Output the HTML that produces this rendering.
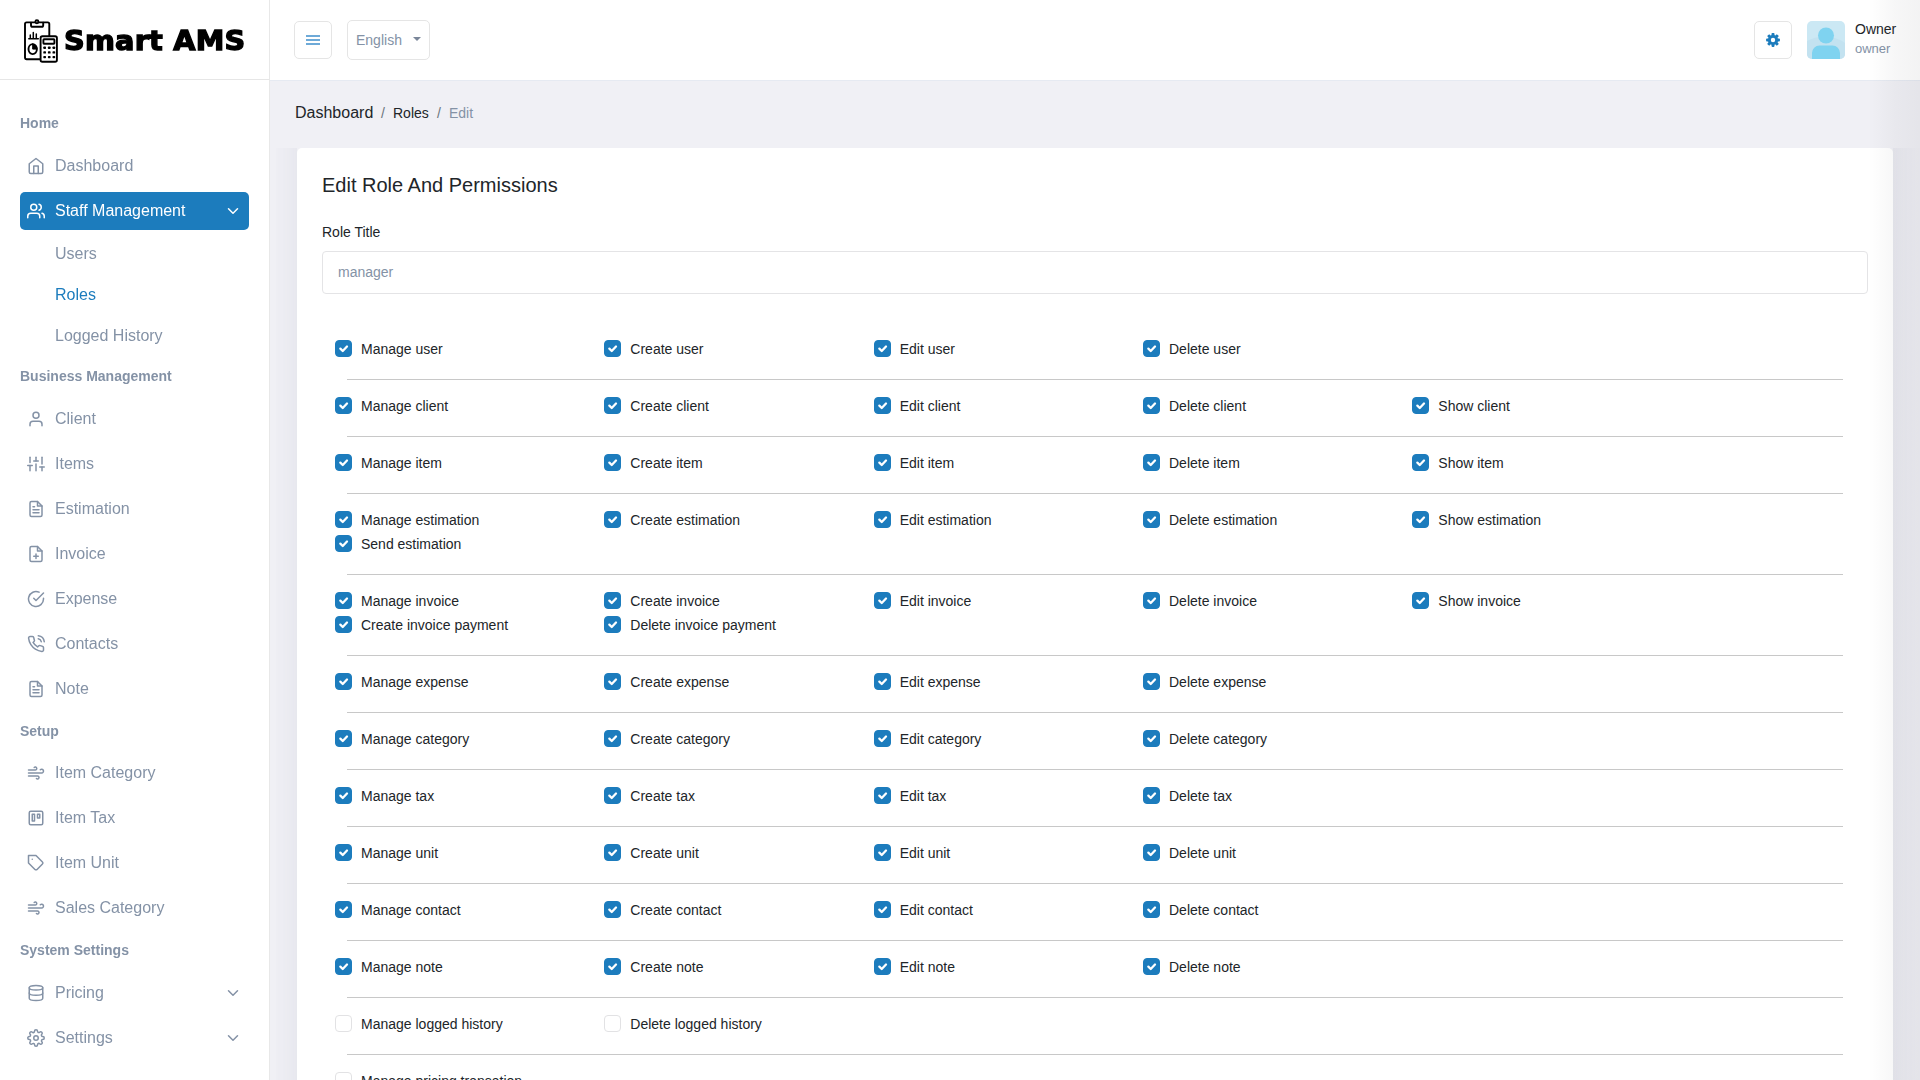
<!DOCTYPE html>
<html lang="en">
<head>
<meta charset="utf-8">
<title>Smart AMS - Edit Role</title>
<style>
*{box-sizing:border-box;margin:0;padding:0}
html,body{width:1920px;height:1080px;overflow:hidden}
body{font-family:"Liberation Sans",Arial,sans-serif;font-size:14px;color:#212529;background:#f0f0f5;position:relative}
a{text-decoration:none;color:inherit}
/* sidebar */
.sidebar{position:absolute;left:0;top:0;width:270px;height:1080px;background:#fff;border-right:1px solid #e8e8e8;z-index:5;}
.brand{position:absolute;left:0;top:0;width:269px;height:80px;z-index:2;will-change:transform;border-bottom:1px solid #e6e6e6}
.brand svg{position:absolute;left:23px;top:18px}
.brand .name{position:absolute;left:64px;top:21px;font-family:"DejaVu Sans","Liberation Sans",sans-serif;font-weight:bold;font-size:26.8px;line-height:40px;color:#000;white-space:nowrap;-webkit-text-stroke:1.3px #000;transform:scaleX(1.072);transform-origin:0 0;letter-spacing:.2px}
.navwrap{position:absolute;left:0;top:0;width:269px;height:1080px;will-change:transform}
.cap{position:absolute;left:20px;font-weight:bold;font-size:14px;line-height:20px;color:#8492a6;white-space:nowrap}
.nav{position:absolute;left:20px;width:229px;height:38px;border-radius:5px;color:#8492a6;font-size:16px;line-height:37px;white-space:nowrap}
.nav .ic{position:absolute;left:7px;top:10px;width:18px;height:18px}
.nav .tx{position:absolute;left:35px;top:0}
.nav .ar{position:absolute;left:204px;top:10px;width:18px;height:18px}
.nav.active{background:#1c7cbd;color:#fff}
.sub{position:absolute;left:55px;font-size:16px;line-height:20px;color:#8492a6;white-space:nowrap}
.sub.on{color:#1c7cbd}
svg.f{fill:none;stroke:currentColor;stroke-width:2;stroke-linecap:round;stroke-linejoin:round}
/* header */
.header{position:absolute;left:270px;top:0;width:1650px;height:81px;background:#fff;border-bottom:1px solid #e6eaf2}
.shr{position:absolute;left:1868px;top:0;width:52px;height:1080px;background:linear-gradient(90deg,rgba(20,20,30,0),rgba(20,20,30,.036) 52%,rgba(20,20,30,.05));z-index:4;pointer-events:none}
.hbtn{position:absolute;border:1px solid #e5e5e5;border-radius:5px;background:#fff}
/* content */
.bc{position:absolute;top:101px;left:295px;height:24px;line-height:24px;white-space:nowrap}
.bc span{position:absolute;top:0}
.cardwrap{position:absolute;left:276px;top:148px;width:1644px;height:932px;overflow:hidden}
.cardsh{position:absolute;left:21px;top:-90px;width:1596px;height:1200px;border-radius:5px;box-shadow:0 6px 30px rgba(182,186,203,.3)}
.card{position:absolute;left:21px;top:0;width:1596px;height:960px;background:#fff;border-radius:5px }
.title{position:absolute;left:25px;top:24px;font-size:20px;line-height:26px;color:#212529;white-space:nowrap}
.lbl{position:absolute;left:25px;top:74px;font-size:14px;line-height:20px;color:#212529}
.inp{position:absolute;left:25px;top:103px;width:1546px;height:43px;border:1px solid #e4e4e6;border-radius:4px;padding:0 15px;font-size:14px;line-height:41px;color:#8492a6}
.hr{position:absolute;left:50px;width:1496px;height:1px;background:#c8c8c8}
.ck{position:absolute;height:24px;line-height:24px;font-size:14px;color:#212529;white-space:nowrap;padding-left:26px}
.ck i{position:absolute;left:0;top:3px;width:17px;height:17px;border-radius:4px;border:1px solid #e2e2e4;background:#fff}
.ck.on i{background:#1c7cbd;border-color:#1c7cbd}
.ck.on i svg{position:absolute;left:-1px;top:-1px;width:17px;height:17px}
</style>
</head>
<body>
<div class="sidebar">
  <div class="brand">
    <svg width="40" height="48" viewBox="0 0 40 48" fill="none" stroke="#000" stroke-width="1.900" stroke-linejoin="round" stroke-linecap="round">
      <path d="M18 41.2H3.6a1.6 1.6 0 0 1-1.600-1.600V6a1.600 1.600 0 0 1 1.600-1.600h21.100a1.600 1.600 0 0 1 1.600 1.600v12"/>
      <path d="M8 4.600v2.600a1.600 1.600 0 0 0 1.600 1.600h9a1.600 1.600 0 0 0 1.600-1.600V4.600"/>
      <circle cx="13.900" cy="3.700" r="1.500" fill="#fff"/>
      <path d="M5.800 20.800h9.500M7.300 20v-3M10.300 20v-5.500M13.300 20v-4" stroke-width="1.500"/>
      <ellipse cx="9.700" cy="31.100" rx="4.200" ry="5"/>
      <path d="M9.700 26.100v5h4.200a4.200 5 0 0 0-4.200-5z" fill="#000" stroke-width="1"/>
      <rect x="17.600" y="18.200" width="16.300" height="25.600" rx="1.800" fill="#fff"/>
      <rect x="20.400" y="21.300" width="11" height="4.400" rx=".6"/>
      <g fill="#000" stroke="none">
        <rect x="20.300" y="28.600" width="2.700" height="2.300" rx=".7"/><rect x="24.900" y="28.600" width="2.700" height="2.300" rx=".7"/><rect x="29.500" y="28.600" width="2.700" height="2.300" rx=".7"/>
        <rect x="20.300" y="33.300" width="2.700" height="2.300" rx=".7"/><rect x="24.900" y="33.300" width="2.700" height="2.300" rx=".7"/><rect x="29.500" y="33.300" width="2.700" height="2.300" rx=".7"/>
        <rect x="20.300" y="38" width="2.700" height="2.300" rx=".7"/><rect x="24.900" y="38" width="2.700" height="2.300" rx=".7"/><rect x="29.500" y="38" width="2.700" height="2.300" rx=".7"/>
      </g>
    </svg>
    <div class="name">Smart AMS</div>
  </div>
  <div class="navwrap">
  <div class="cap" style="top:113px">Home</div>
  <a class="nav" style="top:147.0px"><svg class="f ic" viewBox="0 0 24 24"><path d="M3 9l9-7 9 7v11a2 2 0 0 1-2 2H5a2 2 0 0 1-2-2z"/><polyline points="9 22 9 12 15 12 15 22"/></svg><span class="tx">Dashboard</span></a>
  <a class="nav active" style="top:192.0px"><svg class="f ic" viewBox="0 0 24 24"><path d="M17 21v-2a4 4 0 0 0-4-4H5a4 4 0 0 0-4 4v2"/><circle cx="9" cy="7" r="4"/><path d="M23 21v-2a4 4 0 0 0-3-3.87"/><path d="M16 3.13a4 4 0 0 1 0 7.75"/></svg><span class="tx">Staff Management</span><svg class="f ar" viewBox="0 0 24 24"><polyline points="6 9 12 15 18 9"/></svg></a>
  <a class="sub" style="top:244px">Users</a>
  <a class="sub on" style="top:285px">Roles</a>
  <a class="sub" style="top:326px">Logged History</a>
  <div class="cap" style="top:366px">Business Management</div>
  <a class="nav" style="top:400.0px"><svg class="f ic" viewBox="0 0 24 24"><path d="M20 21v-2a4 4 0 0 0-4-4H8a4 4 0 0 0-4 4v2"/><circle cx="12" cy="7" r="4"/></svg><span class="tx">Client</span></a>
  <a class="nav" style="top:445.0px"><svg class="f ic" viewBox="0 0 24 24"><line x1="4" y1="21" x2="4" y2="14"/><line x1="4" y1="10" x2="4" y2="3"/><line x1="12" y1="21" x2="12" y2="12"/><line x1="12" y1="8" x2="12" y2="3"/><line x1="20" y1="21" x2="20" y2="16"/><line x1="20" y1="12" x2="20" y2="3"/><line x1="1" y1="14" x2="7" y2="14"/><line x1="9" y1="8" x2="15" y2="8"/><line x1="17" y1="16" x2="23" y2="16"/></svg><span class="tx">Items</span></a>
  <a class="nav" style="top:490.0px"><svg class="f ic" viewBox="0 0 24 24"><path d="M14 2H6a2 2 0 0 0-2 2v16a2 2 0 0 0 2 2h12a2 2 0 0 0 2-2V8z"/><polyline points="14 2 14 8 20 8"/><line x1="16" y1="13" x2="8" y2="13"/><line x1="16" y1="17" x2="8" y2="17"/><polyline points="10 9 9 9 8 9"/></svg><span class="tx">Estimation</span></a>
  <a class="nav" style="top:535.0px"><svg class="f ic" viewBox="0 0 24 24"><path d="M14 2H6a2 2 0 0 0-2 2v16a2 2 0 0 0 2 2h12a2 2 0 0 0 2-2V8z"/><polyline points="14 2 14 8 20 8"/><line x1="12" y1="18" x2="12" y2="12"/><line x1="9" y1="15" x2="15" y2="15"/></svg><span class="tx">Invoice</span></a>
  <a class="nav" style="top:580.0px"><svg class="f ic" viewBox="0 0 24 24"><path d="M22 11.08V12a10 10 0 1 1-5.93-9.14"/><polyline points="22 4 12 14.01 9 11.01"/></svg><span class="tx">Expense</span></a>
  <a class="nav" style="top:625.0px"><svg class="f ic" viewBox="0 0 24 24"><path d="M15.05 5A5 5 0 0 1 19 8.95M15.05 1A9 9 0 0 1 23 8.94m-1 7.98v3a2 2 0 0 1-2.18 2 19.79 19.79 0 0 1-8.63-3.07 19.5 19.5 0 0 1-6-6 19.79 19.79 0 0 1-3.07-8.67A2 2 0 0 1 4.11 2h3a2 2 0 0 1 2 1.72 12.84 12.84 0 0 0 .7 2.81 2 2 0 0 1-.45 2.11L8.09 9.91a16 16 0 0 0 6 6l1.27-1.27a2 2 0 0 1 2.11-.45 12.84 12.84 0 0 0 2.81.7A2 2 0 0 1 22 16.92z"/></svg><span class="tx">Contacts</span></a>
  <a class="nav" style="top:670.0px"><svg class="f ic" viewBox="0 0 24 24"><path d="M14 2H6a2 2 0 0 0-2 2v16a2 2 0 0 0 2 2h12a2 2 0 0 0 2-2V8z"/><polyline points="14 2 14 8 20 8"/><line x1="16" y1="13" x2="8" y2="13"/><line x1="16" y1="17" x2="8" y2="17"/><polyline points="10 9 9 9 8 9"/></svg><span class="tx">Note</span></a>
  <div class="cap" style="top:721px">Setup</div>
  <a class="nav" style="top:754.0px"><svg class="f ic" viewBox="0 0 24 24"><path d="M9.59 4.59A2 2 0 1 1 11 8H2m10.59 11.41A2 2 0 1 0 14 16H2m15.73-8.27A2.5 2.5 0 1 1 19.5 12H2"/></svg><span class="tx">Item Category</span></a>
  <a class="nav" style="top:799.0px"><svg class="f ic" viewBox="0 0 24 24"><rect x="3" y="3" width="18" height="18" rx="2" ry="2"/><rect x="7" y="7" width="3" height="9"/><rect x="14" y="7" width="3" height="5"/></svg><span class="tx">Item Tax</span></a>
  <a class="nav" style="top:844.0px"><svg class="f ic" viewBox="0 0 24 24"><path d="M20.59 13.41l-7.17 7.17a2 2 0 0 1-2.83 0L2 12V2h10l8.59 8.59a2 2 0 0 1 0 2.82z"/><line x1="7" y1="7" x2="7.01" y2="7"/></svg><span class="tx">Item Unit</span></a>
  <a class="nav" style="top:889.0px"><svg class="f ic" viewBox="0 0 24 24"><path d="M9.59 4.59A2 2 0 1 1 11 8H2m10.59 11.41A2 2 0 1 0 14 16H2m15.73-8.27A2.5 2.5 0 1 1 19.5 12H2"/></svg><span class="tx">Sales Category</span></a>
  <div class="cap" style="top:940px">System Settings</div>
  <a class="nav" style="top:974.0px"><svg class="f ic" viewBox="0 0 24 24"><ellipse cx="12" cy="5" rx="9" ry="3"/><path d="M21 12c0 1.66-4 3-9 3s-9-1.34-9-3"/><path d="M3 5v14c0 1.66 4 3 9 3s9-1.340 9-3V5"/></svg><span class="tx">Pricing</span><svg class="f ar" viewBox="0 0 24 24"><polyline points="6 9 12 15 18 9"/></svg></a>
  <a class="nav" style="top:1019.0px"><svg class="f ic" viewBox="0 0 24 24"><circle cx="12" cy="12" r="3"/><path d="M19.4 15a1.65 1.65 0 0 0 .33 1.82l.06.06a2 2 0 0 1 0 2.83 2 2 0 0 1-2.83 0l-.06-.06a1.65 1.65 0 0 0-1.82-.33 1.65 1.65 0 0 0-1 1.51V21a2 2 0 0 1-2 2 2 2 0 0 1-2-2v-.09A1.65 1.65 0 0 0 9 19.4a1.65 1.65 0 0 0-1.820.33l-.06.06a2 2 0 0 1-2.83 0 2 2 0 0 1 0-2.83l.06-.06a1.65 1.65 0 0 0 .33-1.82 1.65 1.65 0 0 0-1.51-1H3a2 2 0 0 1-2-2 2 2 0 0 1 2-2h.09A1.65 1.65 0 0 0 4.6 9a1.65 1.65 0 0 0-.33-1.82l-.06-.06a2 2 0 0 1 0-2.83 2 2 0 0 1 2.83 0l.06.06a1.65 1.65 0 0 0 1.820.33H9a1.65 1.65 0 0 0 1-1.51V3a2 2 0 0 1 2-2 2 2 0 0 1 2 2v.09a1.65 1.65 0 0 0 1 1.510 1.65 1.65 0 0 0 1.820-.33l.06-.06a2 2 0 0 1 2.830 0 2 2 0 0 1 0 2.83l-.06.06a1.65 1.65 0 0 0-.33 1.820V9a1.65 1.65 0 0 0 1.510 1H21a2 2 0 0 1 2 2 2 2 0 0 1-2 2h-.09a1.65 1.65 0 0 0-1.510 1z"/></svg><span class="tx">Settings</span><svg class="f ar" viewBox="0 0 24 24"><polyline points="6 9 12 15 18 9"/></svg></a>
  </div>
</div>
<div class="header">
  <div class="hbtn" style="left:24px;top:21px;width:38px;height:38px">
    <svg width="14" height="12" viewBox="0 0 14 12" style="position:absolute;left:11px;top:12px"><path d="M0 2h14M0 6h14M0 10h14" stroke="#3f8fcb" stroke-width="1.600" fill="none"/></svg>
  </div>
  <div class="hbtn" style="left:77px;top:20px;width:83px;height:40px">
    <span style="position:absolute;left:8px;top:0;line-height:38px;font-size:14px;color:#8492a6">English</span>
    <svg width="8" height="4" viewBox="0 0 8 4" style="position:absolute;left:65px;top:15.500px"><path d="M0 0h8L4 4z" fill="#7a8699"/></svg>
  </div>
  <div class="hbtn" style="left:1484px;top:21px;width:38px;height:38px"><svg viewBox="-8 -8 16 16" width="16" height="16" style="position:absolute;left:10px;top:10px"><g fill="#1c7cbd"><rect x="-1.500" y="-6.900" width="3" height="13.800" rx=".800"/><rect x="-1.500" y="-6.900" width="3" height="13.800" rx=".800" transform="rotate(45)"/><rect x="-1.500" y="-6.900" width="3" height="13.800" rx=".800" transform="rotate(90)"/><rect x="-1.500" y="-6.900" width="3" height="13.800" rx=".800" transform="rotate(135)"/></g><circle r="5.100" fill="#1c7cbd"/><circle r="2.200" fill="#fff"/></svg></div>
  <div style="position:absolute;left:1537px;top:21px;width:38px;height:38px;border-radius:5px;background:#cbe8f4;overflow:hidden">
    <svg width="38" height="38" viewBox="0 0 38 38"><path d="M0 20C10 14 28 14 38 22V38H0z" fill="#c3e2f0"/><circle cx="19" cy="14.500" r="8" fill="#7fd3f0"/><path d="M5 38v-6a7.500 7.500 0 0 1 7.500-7.500h13a7.500 7.500 0 0 1 7.500 7.500v6z" fill="#7fd3f0"/></svg>
  </div>
  <div style="position:absolute;left:1585px;top:19px;font-size:14px;line-height:20px;color:#212529">Owner</div>
  <div style="position:absolute;left:1585px;top:40px;font-size:13px;line-height:18px;color:#8492a6">owner</div>
</div>
<div class="shr"></div>
<div class="bc">
  <span style="left:0;font-size:16px;color:#212529">Dashboard</span>
  <span style="left:86px;color:#6c757d">/</span>
  <span style="left:98px;color:#212529">Roles</span>
  <span style="left:142px;color:#6c757d">/</span>
  <span style="left:154px;color:#8492a6">Edit</span>
</div>
<div class="cardwrap"><div class="cardsh"></div>
<div class="card">
  <div class="title">Edit Role And Permissions</div>
  <div class="lbl">Role Title</div>
  <div class="inp">manager</div>
  <label class="ck on" style="left:38.00px;top:189px"><i><svg viewBox="0 0 20 20"><path d="M6.300 10.200l2.800 2.700l5-5.200" fill="none" stroke="#fff" stroke-width="2.700" stroke-linecap="round" stroke-linejoin="round"/></svg></i>Manage user</label>
  <label class="ck on" style="left:307.33px;top:189px"><i><svg viewBox="0 0 20 20"><path d="M6.300 10.200l2.800 2.700l5-5.200" fill="none" stroke="#fff" stroke-width="2.700" stroke-linecap="round" stroke-linejoin="round"/></svg></i>Create user</label>
  <label class="ck on" style="left:576.67px;top:189px"><i><svg viewBox="0 0 20 20"><path d="M6.300 10.200l2.800 2.700l5-5.200" fill="none" stroke="#fff" stroke-width="2.700" stroke-linecap="round" stroke-linejoin="round"/></svg></i>Edit user</label>
  <label class="ck on" style="left:846.00px;top:189px"><i><svg viewBox="0 0 20 20"><path d="M6.300 10.200l2.800 2.700l5-5.200" fill="none" stroke="#fff" stroke-width="2.700" stroke-linecap="round" stroke-linejoin="round"/></svg></i>Delete user</label>
  <div class="hr" style="top:231px"></div>
  <label class="ck on" style="left:38.00px;top:246px"><i><svg viewBox="0 0 20 20"><path d="M6.300 10.200l2.800 2.700l5-5.200" fill="none" stroke="#fff" stroke-width="2.700" stroke-linecap="round" stroke-linejoin="round"/></svg></i>Manage client</label>
  <label class="ck on" style="left:307.33px;top:246px"><i><svg viewBox="0 0 20 20"><path d="M6.300 10.200l2.800 2.700l5-5.200" fill="none" stroke="#fff" stroke-width="2.700" stroke-linecap="round" stroke-linejoin="round"/></svg></i>Create client</label>
  <label class="ck on" style="left:576.67px;top:246px"><i><svg viewBox="0 0 20 20"><path d="M6.300 10.200l2.800 2.700l5-5.200" fill="none" stroke="#fff" stroke-width="2.700" stroke-linecap="round" stroke-linejoin="round"/></svg></i>Edit client</label>
  <label class="ck on" style="left:846.00px;top:246px"><i><svg viewBox="0 0 20 20"><path d="M6.300 10.200l2.800 2.700l5-5.200" fill="none" stroke="#fff" stroke-width="2.700" stroke-linecap="round" stroke-linejoin="round"/></svg></i>Delete client</label>
  <label class="ck on" style="left:1115.33px;top:246px"><i><svg viewBox="0 0 20 20"><path d="M6.300 10.200l2.800 2.700l5-5.200" fill="none" stroke="#fff" stroke-width="2.700" stroke-linecap="round" stroke-linejoin="round"/></svg></i>Show client</label>
  <div class="hr" style="top:288px"></div>
  <label class="ck on" style="left:38.00px;top:303px"><i><svg viewBox="0 0 20 20"><path d="M6.300 10.200l2.800 2.700l5-5.200" fill="none" stroke="#fff" stroke-width="2.700" stroke-linecap="round" stroke-linejoin="round"/></svg></i>Manage item</label>
  <label class="ck on" style="left:307.33px;top:303px"><i><svg viewBox="0 0 20 20"><path d="M6.300 10.200l2.800 2.700l5-5.200" fill="none" stroke="#fff" stroke-width="2.700" stroke-linecap="round" stroke-linejoin="round"/></svg></i>Create item</label>
  <label class="ck on" style="left:576.67px;top:303px"><i><svg viewBox="0 0 20 20"><path d="M6.300 10.200l2.800 2.700l5-5.200" fill="none" stroke="#fff" stroke-width="2.700" stroke-linecap="round" stroke-linejoin="round"/></svg></i>Edit item</label>
  <label class="ck on" style="left:846.00px;top:303px"><i><svg viewBox="0 0 20 20"><path d="M6.300 10.200l2.800 2.700l5-5.200" fill="none" stroke="#fff" stroke-width="2.700" stroke-linecap="round" stroke-linejoin="round"/></svg></i>Delete item</label>
  <label class="ck on" style="left:1115.33px;top:303px"><i><svg viewBox="0 0 20 20"><path d="M6.300 10.200l2.800 2.700l5-5.200" fill="none" stroke="#fff" stroke-width="2.700" stroke-linecap="round" stroke-linejoin="round"/></svg></i>Show item</label>
  <div class="hr" style="top:345px"></div>
  <label class="ck on" style="left:38.00px;top:360px"><i><svg viewBox="0 0 20 20"><path d="M6.300 10.200l2.800 2.700l5-5.200" fill="none" stroke="#fff" stroke-width="2.700" stroke-linecap="round" stroke-linejoin="round"/></svg></i>Manage estimation</label>
  <label class="ck on" style="left:307.33px;top:360px"><i><svg viewBox="0 0 20 20"><path d="M6.300 10.200l2.800 2.700l5-5.200" fill="none" stroke="#fff" stroke-width="2.700" stroke-linecap="round" stroke-linejoin="round"/></svg></i>Create estimation</label>
  <label class="ck on" style="left:576.67px;top:360px"><i><svg viewBox="0 0 20 20"><path d="M6.300 10.200l2.800 2.700l5-5.200" fill="none" stroke="#fff" stroke-width="2.700" stroke-linecap="round" stroke-linejoin="round"/></svg></i>Edit estimation</label>
  <label class="ck on" style="left:846.00px;top:360px"><i><svg viewBox="0 0 20 20"><path d="M6.300 10.200l2.800 2.700l5-5.200" fill="none" stroke="#fff" stroke-width="2.700" stroke-linecap="round" stroke-linejoin="round"/></svg></i>Delete estimation</label>
  <label class="ck on" style="left:1115.33px;top:360px"><i><svg viewBox="0 0 20 20"><path d="M6.300 10.200l2.800 2.700l5-5.200" fill="none" stroke="#fff" stroke-width="2.700" stroke-linecap="round" stroke-linejoin="round"/></svg></i>Show estimation</label>
  <label class="ck on" style="left:38.00px;top:384px"><i><svg viewBox="0 0 20 20"><path d="M6.300 10.200l2.800 2.700l5-5.200" fill="none" stroke="#fff" stroke-width="2.700" stroke-linecap="round" stroke-linejoin="round"/></svg></i>Send estimation</label>
  <div class="hr" style="top:426px"></div>
  <label class="ck on" style="left:38.00px;top:441px"><i><svg viewBox="0 0 20 20"><path d="M6.300 10.200l2.800 2.700l5-5.200" fill="none" stroke="#fff" stroke-width="2.700" stroke-linecap="round" stroke-linejoin="round"/></svg></i>Manage invoice</label>
  <label class="ck on" style="left:307.33px;top:441px"><i><svg viewBox="0 0 20 20"><path d="M6.300 10.200l2.800 2.700l5-5.200" fill="none" stroke="#fff" stroke-width="2.700" stroke-linecap="round" stroke-linejoin="round"/></svg></i>Create invoice</label>
  <label class="ck on" style="left:576.67px;top:441px"><i><svg viewBox="0 0 20 20"><path d="M6.300 10.200l2.800 2.700l5-5.200" fill="none" stroke="#fff" stroke-width="2.700" stroke-linecap="round" stroke-linejoin="round"/></svg></i>Edit invoice</label>
  <label class="ck on" style="left:846.00px;top:441px"><i><svg viewBox="0 0 20 20"><path d="M6.300 10.200l2.800 2.700l5-5.200" fill="none" stroke="#fff" stroke-width="2.700" stroke-linecap="round" stroke-linejoin="round"/></svg></i>Delete invoice</label>
  <label class="ck on" style="left:1115.33px;top:441px"><i><svg viewBox="0 0 20 20"><path d="M6.300 10.200l2.800 2.700l5-5.200" fill="none" stroke="#fff" stroke-width="2.700" stroke-linecap="round" stroke-linejoin="round"/></svg></i>Show invoice</label>
  <label class="ck on" style="left:38.00px;top:465px"><i><svg viewBox="0 0 20 20"><path d="M6.300 10.200l2.800 2.700l5-5.200" fill="none" stroke="#fff" stroke-width="2.700" stroke-linecap="round" stroke-linejoin="round"/></svg></i>Create invoice payment</label>
  <label class="ck on" style="left:307.33px;top:465px"><i><svg viewBox="0 0 20 20"><path d="M6.300 10.200l2.800 2.700l5-5.200" fill="none" stroke="#fff" stroke-width="2.700" stroke-linecap="round" stroke-linejoin="round"/></svg></i>Delete invoice payment</label>
  <div class="hr" style="top:507px"></div>
  <label class="ck on" style="left:38.00px;top:522px"><i><svg viewBox="0 0 20 20"><path d="M6.300 10.200l2.800 2.700l5-5.200" fill="none" stroke="#fff" stroke-width="2.700" stroke-linecap="round" stroke-linejoin="round"/></svg></i>Manage expense</label>
  <label class="ck on" style="left:307.33px;top:522px"><i><svg viewBox="0 0 20 20"><path d="M6.300 10.200l2.800 2.700l5-5.200" fill="none" stroke="#fff" stroke-width="2.700" stroke-linecap="round" stroke-linejoin="round"/></svg></i>Create expense</label>
  <label class="ck on" style="left:576.67px;top:522px"><i><svg viewBox="0 0 20 20"><path d="M6.300 10.200l2.800 2.700l5-5.200" fill="none" stroke="#fff" stroke-width="2.700" stroke-linecap="round" stroke-linejoin="round"/></svg></i>Edit expense</label>
  <label class="ck on" style="left:846.00px;top:522px"><i><svg viewBox="0 0 20 20"><path d="M6.300 10.200l2.800 2.700l5-5.200" fill="none" stroke="#fff" stroke-width="2.700" stroke-linecap="round" stroke-linejoin="round"/></svg></i>Delete expense</label>
  <div class="hr" style="top:564px"></div>
  <label class="ck on" style="left:38.00px;top:579px"><i><svg viewBox="0 0 20 20"><path d="M6.300 10.200l2.800 2.700l5-5.200" fill="none" stroke="#fff" stroke-width="2.700" stroke-linecap="round" stroke-linejoin="round"/></svg></i>Manage category</label>
  <label class="ck on" style="left:307.33px;top:579px"><i><svg viewBox="0 0 20 20"><path d="M6.300 10.200l2.800 2.700l5-5.200" fill="none" stroke="#fff" stroke-width="2.700" stroke-linecap="round" stroke-linejoin="round"/></svg></i>Create category</label>
  <label class="ck on" style="left:576.67px;top:579px"><i><svg viewBox="0 0 20 20"><path d="M6.300 10.200l2.800 2.700l5-5.200" fill="none" stroke="#fff" stroke-width="2.700" stroke-linecap="round" stroke-linejoin="round"/></svg></i>Edit category</label>
  <label class="ck on" style="left:846.00px;top:579px"><i><svg viewBox="0 0 20 20"><path d="M6.300 10.200l2.800 2.700l5-5.200" fill="none" stroke="#fff" stroke-width="2.700" stroke-linecap="round" stroke-linejoin="round"/></svg></i>Delete category</label>
  <div class="hr" style="top:621px"></div>
  <label class="ck on" style="left:38.00px;top:636px"><i><svg viewBox="0 0 20 20"><path d="M6.300 10.200l2.800 2.700l5-5.200" fill="none" stroke="#fff" stroke-width="2.700" stroke-linecap="round" stroke-linejoin="round"/></svg></i>Manage tax</label>
  <label class="ck on" style="left:307.33px;top:636px"><i><svg viewBox="0 0 20 20"><path d="M6.300 10.200l2.800 2.700l5-5.200" fill="none" stroke="#fff" stroke-width="2.700" stroke-linecap="round" stroke-linejoin="round"/></svg></i>Create tax</label>
  <label class="ck on" style="left:576.67px;top:636px"><i><svg viewBox="0 0 20 20"><path d="M6.300 10.200l2.800 2.700l5-5.200" fill="none" stroke="#fff" stroke-width="2.700" stroke-linecap="round" stroke-linejoin="round"/></svg></i>Edit tax</label>
  <label class="ck on" style="left:846.00px;top:636px"><i><svg viewBox="0 0 20 20"><path d="M6.300 10.200l2.800 2.700l5-5.200" fill="none" stroke="#fff" stroke-width="2.700" stroke-linecap="round" stroke-linejoin="round"/></svg></i>Delete tax</label>
  <div class="hr" style="top:678px"></div>
  <label class="ck on" style="left:38.00px;top:693px"><i><svg viewBox="0 0 20 20"><path d="M6.300 10.200l2.800 2.700l5-5.200" fill="none" stroke="#fff" stroke-width="2.700" stroke-linecap="round" stroke-linejoin="round"/></svg></i>Manage unit</label>
  <label class="ck on" style="left:307.33px;top:693px"><i><svg viewBox="0 0 20 20"><path d="M6.300 10.200l2.800 2.700l5-5.200" fill="none" stroke="#fff" stroke-width="2.700" stroke-linecap="round" stroke-linejoin="round"/></svg></i>Create unit</label>
  <label class="ck on" style="left:576.67px;top:693px"><i><svg viewBox="0 0 20 20"><path d="M6.300 10.200l2.800 2.700l5-5.200" fill="none" stroke="#fff" stroke-width="2.700" stroke-linecap="round" stroke-linejoin="round"/></svg></i>Edit unit</label>
  <label class="ck on" style="left:846.00px;top:693px"><i><svg viewBox="0 0 20 20"><path d="M6.300 10.200l2.800 2.700l5-5.200" fill="none" stroke="#fff" stroke-width="2.700" stroke-linecap="round" stroke-linejoin="round"/></svg></i>Delete unit</label>
  <div class="hr" style="top:735px"></div>
  <label class="ck on" style="left:38.00px;top:750px"><i><svg viewBox="0 0 20 20"><path d="M6.300 10.200l2.800 2.700l5-5.200" fill="none" stroke="#fff" stroke-width="2.700" stroke-linecap="round" stroke-linejoin="round"/></svg></i>Manage contact</label>
  <label class="ck on" style="left:307.33px;top:750px"><i><svg viewBox="0 0 20 20"><path d="M6.300 10.200l2.800 2.700l5-5.200" fill="none" stroke="#fff" stroke-width="2.700" stroke-linecap="round" stroke-linejoin="round"/></svg></i>Create contact</label>
  <label class="ck on" style="left:576.67px;top:750px"><i><svg viewBox="0 0 20 20"><path d="M6.300 10.200l2.800 2.700l5-5.200" fill="none" stroke="#fff" stroke-width="2.700" stroke-linecap="round" stroke-linejoin="round"/></svg></i>Edit contact</label>
  <label class="ck on" style="left:846.00px;top:750px"><i><svg viewBox="0 0 20 20"><path d="M6.300 10.200l2.800 2.700l5-5.200" fill="none" stroke="#fff" stroke-width="2.700" stroke-linecap="round" stroke-linejoin="round"/></svg></i>Delete contact</label>
  <div class="hr" style="top:792px"></div>
  <label class="ck on" style="left:38.00px;top:807px"><i><svg viewBox="0 0 20 20"><path d="M6.300 10.200l2.800 2.700l5-5.200" fill="none" stroke="#fff" stroke-width="2.700" stroke-linecap="round" stroke-linejoin="round"/></svg></i>Manage note</label>
  <label class="ck on" style="left:307.33px;top:807px"><i><svg viewBox="0 0 20 20"><path d="M6.300 10.200l2.800 2.700l5-5.200" fill="none" stroke="#fff" stroke-width="2.700" stroke-linecap="round" stroke-linejoin="round"/></svg></i>Create note</label>
  <label class="ck on" style="left:576.67px;top:807px"><i><svg viewBox="0 0 20 20"><path d="M6.300 10.200l2.800 2.700l5-5.200" fill="none" stroke="#fff" stroke-width="2.700" stroke-linecap="round" stroke-linejoin="round"/></svg></i>Edit note</label>
  <label class="ck on" style="left:846.00px;top:807px"><i><svg viewBox="0 0 20 20"><path d="M6.300 10.200l2.800 2.700l5-5.200" fill="none" stroke="#fff" stroke-width="2.700" stroke-linecap="round" stroke-linejoin="round"/></svg></i>Delete note</label>
  <div class="hr" style="top:849px"></div>
  <label class="ck" style="left:38.00px;top:864px"><i></i>Manage logged history</label>
  <label class="ck" style="left:307.33px;top:864px"><i></i>Delete logged history</label>
  <div class="hr" style="top:906px"></div>
  <label class="ck" style="left:38.00px;top:921px"><i></i>Manage pricing transation</label>
  <div class="hr" style="top:963px"></div>
</div></div>
</body>
</html>
